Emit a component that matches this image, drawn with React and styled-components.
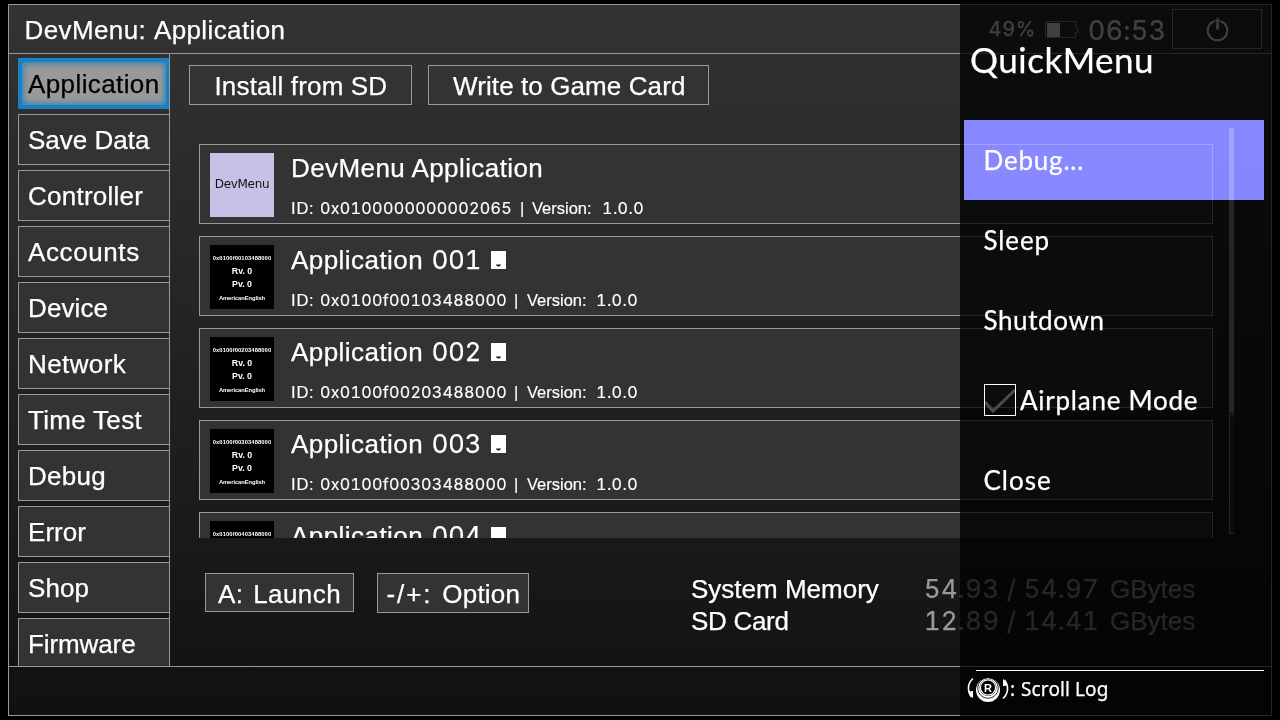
import React from 'react';
import styled, { createGlobalStyle } from 'styled-components';

const Global = createGlobalStyle`
  * { box-sizing: border-box; }
  body { margin: 0; background: #000; }
`;

const LINE = '#999';
const PANEL = '#333';

const Screen = styled.div`
  position: relative;
  width: 1280px;
  height: 720px;
  padding: 4px 8px;
  overflow: hidden;
  background: #000;
  color: #fff;
  font: 26px/32px 'Liberation Sans', Arial, sans-serif;
  white-space: pre;
  -webkit-text-stroke: 0.25px currentColor;
`;

const Frame = styled.div`
  height: 712px;
  display: flex;
  flex-direction: column;
  border: 1px solid ${LINE};
  background: linear-gradient(#333, #111);
`;

const Header = styled.header`
  height: 49px;
  flex: none;
  display: flex;
  align-items: center;
  padding: 2px 9px 0 15.5px;
  border-bottom: 1px solid ${LINE};
`;

const Text = styled.span`
  letter-spacing: ${(p) => p.$ls || 0}px;
`;

const Digits = styled.span`
  font-family: Inter, sans-serif;
  font-size: 0.98em;
  font-variant-numeric: tabular-nums;
  font-feature-settings: 'tnum', 'calt' 0;
  letter-spacing: ${(p) => p.$ls || 0}px;
  width: ${(p) => (p.$w ? p.$w + 'px' : 'auto')};
`;

const Title = styled.h1`
  margin: 0;
  flex: 1;
  font: inherit;
  letter-spacing: 0.4px;
  word-spacing: 1.5px;
`;

const Percent = styled(Digits)`
  font-size: 20px;
  letter-spacing: 0.6px;
  margin-right: 9px;
  margin-top: -2px;
`;

const Clock = styled(Digits)`
  width: 84px;
  margin-left: 9px;
  font-size: 26.5px;
  letter-spacing: 0.5px;
`;

const PowerButton = styled.button`
  width: 90px;
  height: 40px;
  margin: -2px 0 0;
  padding: 0;
  display: flex;
  align-items: center;
  justify-content: center;
  color: #fff;
  background: ${PANEL};
  border: 1px solid ${LINE};
`;

const Body = styled.div`
  height: 612px;
  flex: none;
  display: flex;
`;

const Sidebar = styled.nav`
  width: 161px;
  flex: none;
  display: flex;
  flex-direction: column;
  gap: 5px;
  padding: 4px 0 0 9px;
  overflow: hidden;
  border-right: 1px solid ${LINE};
`;

const Tab = styled.div`
  height: 51px;
  flex: none;
  padding-left: 9px;
  line-height: 50px;
  letter-spacing: ${(p) => p.$ls}px;
  color: ${(p) => (p.$active ? '#000' : '#fff')};
  background: ${(p) => (p.$active ? '#999' : PANEL)};
  border: 1px solid ${(p) => (p.$active ? '#1a80c4' : LINE)};
  border-right: 0;
  box-shadow: ${(p) =>
    p.$active ? 'inset 0 0 0 3px #1a80c4, inset 0 0 6px 4px #1a80c4' : 'none'};
`;

const Main = styled.main`
  flex: 1;
  display: flex;
  flex-direction: column;
`;

const Actions = styled.div`
  display: flex;
  gap: 16px;
  padding: 11px 0 0 19px;
`;

const Button = styled.button`
  width: ${(p) => p.$w}px;
  height: ${(p) => p.$h || 40}px;
  padding: 2px 0 0 ${(p) => p.$pad}px;
  font: inherit;
  line-height: 32px;
  letter-spacing: ${(p) => p.$ls || 0}px;
  word-spacing: ${(p) => p.$ws || 0}px;
  text-align: left;
  color: #fff;
  background: ${PANEL};
  border: 1px solid ${LINE};
`;

const ListArea = styled.div`
  height: 410px;
  margin-top: 23px;
  display: flex;
  overflow: hidden;
  padding-left: 29px;
`;

const List = styled.div`
  width: 1014px;
  flex: none;
  display: flex;
  flex-direction: column;
  gap: 12px;
  padding-top: 16px;
`;

const Row = styled.div`
  height: 80px;
  flex: none;
  display: flex;
  gap: 17px;
  padding: 8px 10px;
  background: ${PANEL};
  border: 1px solid ${LINE};
`;

const Thumb = styled.div`
  width: 64px;
  height: 64px;
  flex: none;
  display: flex;
  flex-direction: column;
  align-items: center;
  -webkit-text-stroke: 0;
  color: ${(p) => (p.$light ? '#111' : '#fff')};
  background: ${(p) => (p.$light ? '#c8c0e6' : '#000')};
`;

const ThumbName = styled.span`
  font: 12px/62px 'DejaVu Sans', sans-serif;
  letter-spacing: -0.3px;
`;

const ThumbSmall = styled.span`
  font-size: 5.8px;
  line-height: 8px;
  font-weight: bold;
  margin-top: ${(p) => p.$top}px;
  letter-spacing: ${(p) => p.$ls || 0}px;
`;

const ThumbMid = styled.span`
  font-size: 8.8px;
  line-height: 12.5px;
  font-weight: bold;
`;

const ThumbLines = styled.div`
  display: flex;
  flex-direction: column;
  align-items: center;
  padding-top: 3.5px;
`;

const Info = styled.div`
  display: flex;
  flex-direction: column;
`;

const Name = styled.div`
  height: 32px;
  display: flex;
  margin-top: -1px;
`;

const NameNumber = styled(Digits)`
  width: 59px;
  margin-left: 1px;
`;

const CardIcon = styled.svg`
  margin: 7px 0 0;
`;

const Meta = styled.div`
  display: flex;
  margin-top: 13px;
  font-size: 16.5px;
  line-height: 22px;
  -webkit-text-stroke-width: 0.15px;
`;

const MetaPart = styled.span`
  letter-spacing: ${(p) => p.$ls || 0}px;
  width: ${(p) => (p.$w ? p.$w + 'px' : 'auto')};
`;

const Scrollbar = styled.div`
  width: 5px;
  height: 406px;
  margin-left: 16px;
  display: flex;
  flex-direction: column;
  gap: 1px;
`;

const ScrollThumb = styled.div`
  height: 285px;
  background: ${LINE};
`;

const ScrollRest = styled.div`
  flex: 1;
  background: ${PANEL};
  border: 1px solid ${LINE};
  border-right: 0;
`;

const Bottom = styled.div`
  display: flex;
  padding: 35px 0 0 35px;
`;

const Hints = styled.div`
  width: 486px;
  display: flex;
  align-items: flex-start;
  gap: 23px;
`;

const Storage = styled.div`
  display: grid;
  grid-template-columns: 233px 186px auto;
  grid-auto-rows: 32px;
`;

const Amount = styled(Digits)`
  color: #999;
  letter-spacing: 0.5px;
`;

const Unit = styled.span`
  color: #999;
`;

const QuickPanel = styled.aside`
  position: absolute;
  top: 0;
  left: 960px;
  width: 320px;
  height: 720px;
  display: flex;
  flex-direction: column;
  background: rgba(0, 0, 0, 0.75);
  font-family: Lato, sans-serif;
`;

const QuickLayer = styled.div`
  position: absolute;
  top: 120px;
  left: 964px;
  width: 300px;
  height: 80px;
  background: #7c7cf6;
  mix-blend-mode: plus-lighter;
`;

const QuickContent = styled(QuickPanel)`
  background: none;
`;

const QuickTitle = styled.h2`
  height: 120px;
  margin: 0;
  padding: 37px 0 0 10px;
  font-size: 35px;
  line-height: 44px;
  font-weight: 400;
  letter-spacing: 0.5px;
`;

const QuickItem = styled.div`
  height: 80px;
  display: flex;
  align-items: center;
  padding: 0 0 0 23.5px;
  letter-spacing: ${(p) => p.$ls || 0.6}px;
`;

const Check = styled.span`
  width: 32px;
  height: 32px;
  flex: none;
  margin: 0 4px 0 0.5px;
  border: 1px solid #fff;
`;

const Rule = styled.div`
  height: 1px;
  margin: 150px 16px 0 16px;
  background: #fff;
`;

const QuickFooter = styled.footer`
  display: flex;
  align-items: center;
  height: 35px;
  margin: 0 16px 0 6px;
  font: 19px/30px 'Noto Sans', sans-serif;
`;

const FootLabel = styled.span`
  margin-left: 6px;
  letter-spacing: 0.1px;
`;

const StatusBar = styled.div`
  flex: 1;
  border-top: 1px solid ${LINE};
`;

const tabs = [
  ['Application', 0.4],
  ['Save Data', 0],
  ['Controller', 0.25],
  ['Accounts', 0.6],
  ['Device', 0.1],
  ['Network', 0.4],
  ['Time Test', 0.3],
  ['Debug', 0.3],
  ['Error', 0.05],
  ['Shop', 0.1],
  ['Firmware', -0.1],
];

const apps = ['1', '2', '3', '4'];

const Battery = () => (
  <svg width="34" height="20" viewBox="0 0 34 20" fill="none">
    <path d="M.5 1.5h30v5h2v6h-2v5H.5z" stroke={LINE} />
    <path d="M2 3h13v14H2z" fill="#fff" />
  </svg>
);

const PowerIcon = () => (
  <svg width="24" height="26" viewBox="0 0 24 26" fill="none" stroke="#fff" strokeWidth="2">
    <circle cx="12.5" cy="14.5" r="9.8" />
    <path d="M12.5 2v1.500M12.5 6.500v7" strokeWidth="2.5" />
    <path d="M9.8 4.500v3M15.2 4.500v3" stroke={PANEL} strokeWidth="1.2" />
  </svg>
);

const StickIcon = () => (
  <svg width="44" height="28" viewBox="0 0 44 28" fill="none" stroke="#fff">
    <circle cx="22" cy="15" r="12" fill="#fff" stroke="none" />
    <circle cx="22" cy="13" r="10.3" stroke="#000" strokeWidth="0.8" />
    <circle cx="22" cy="12.5" r="8" fill="#000" stroke="#000" strokeWidth="1" />
    <circle cx="22" cy="12.5" r="7.6" strokeWidth="1.2" />
    <text x="22" y="16.5" textAnchor="middle" fontFamily="Liberation Sans" fontSize="11" fontWeight="bold" fill="#fff" stroke="none">R</text>
    <path d="M7 3.500C1.500 8 1 16 5.500 22" strokeWidth="1.6" />
    <path d="M2.300 16.500l4.700-.5v7.500z" fill="#fff" stroke="none" />
    <path d="M37 23.500c5.500-5 6-12.500 1.500-18.500" strokeWidth="1.6" />
    <path d="M37 3.500v7.500l4.700-.5z" fill="#fff" stroke="none" />
  </svg>
);

function AppRow({ n, peek }) {
  return (
    <Row>
      <Thumb>
        <ThumbSmall $top={8.5} $ls={0.1}>{`0x0100f00${n}03488000`}</ThumbSmall>
        {!peek && (
          <ThumbLines>
            <ThumbMid>Rv. 0</ThumbMid>
            <ThumbMid>Pv. 0</ThumbMid>
            <ThumbSmall $top={4} $ls={-0.08}>AmericanEnglish</ThumbSmall>
          </ThumbLines>
        )}
      </Thumb>
      <Info>
        <Name>
          <Text $ls={0.45}>Application </Text>
          <NameNumber>{`00${n}`}</NameNumber>
          <CardIcon width="15" height="18" viewBox="0 0 15 18">
            <path d="M0 0h15v18H0z" fill="#fff" />
            <path d="M5 13.500h5v.5l-1.500 1.500h-2L5 14z" fill="#222" />
          </CardIcon>
        </Name>
        {!peek && (
          <Meta>
            <MetaPart $w={29} $ls={0.8}>ID:</MetaPart>
            <Digits $w={194} $ls={0.25}>{`0x0100f00${n}03488000`}</Digits>
            <MetaPart $w={13}>|</MetaPart>
            <MetaPart $w={69}>Version:</MetaPart>
            <Digits $ls={0.4}>1.0.0</Digits>
          </Meta>
        )}
      </Info>
    </Row>
  );
}

export default function App() {
  return (
    <Screen>
      <Global />
      <Frame>
        <Header>
          <Title>DevMenu: Application</Title>
          <Percent>49%</Percent>
          <Battery />
          <Clock>06:53</Clock>
          <PowerButton><PowerIcon /></PowerButton>
        </Header>
        <Body>
          <Sidebar>
            {tabs.map(([name, ls], i) => (
              <Tab key={name} $ls={ls} $active={i === 0}>{name}</Tab>
            ))}
          </Sidebar>
          <Main>
            <Actions>
              <Button $w={223} $pad={24.5} $ls={0.15}>Install from SD</Button>
              <Button $w={281} $pad={24} $ls={0.1}>Write to Game Card</Button>
            </Actions>
            <ListArea>
              <List>
                <Row>
                  <Thumb $light><ThumbName>DevMenu</ThumbName></Thumb>
                  <Info>
                    <Name><Text $ls={0.42}>DevMenu Application</Text></Name>
                    <Meta>
                      <MetaPart $w={29} $ls={0.8}>ID:</MetaPart>
                      <Digits $w={200} $ls={0.28}>0x0100000000002065</Digits>
                      <MetaPart $w={12}>|</MetaPart>
                      <MetaPart $w={70}>Version:</MetaPart>
                      <Digits $ls={0.4}>1.0.0</Digits>
                    </Meta>
                  </Info>
                </Row>
                {apps.map((n, i) => <AppRow key={n} n={n} peek={i === 3} />)}
              </List>
              <Scrollbar>
                <ScrollThumb />
                <ScrollRest />
              </Scrollbar>
            </ListArea>
            <Bottom>
              <Hints>
                <Button $w={149} $h={39} $pad={12} $ls={0.45} $ws={2}>A: Launch</Button>
                <Button $w={152} $pad={8.5} $ws={2.5}><Text $ls={1.9}>-/+:</Text><Text $ls={0.2}> Option</Text></Button>
              </Hints>
              <Storage>
                <Text>System Memory</Text>
                <Amount>54.93 / 54.97</Amount>
                <Unit>GBytes</Unit>
                <Text $ls={-0.3}>SD Card</Text>
                <Amount>12.89 / 14.41</Amount>
                <Unit>GBytes</Unit>
              </Storage>
            </Bottom>
          </Main>
        </Body>
        <StatusBar />
      </Frame>
      <QuickPanel />
      <QuickLayer />
      <QuickContent>
        <QuickTitle>QuickMenu</QuickTitle>
        <QuickItem $ls={0.8}>Debug...</QuickItem>
        <QuickItem $ls={0.9}>Sleep</QuickItem>
        <QuickItem>Shutdown</QuickItem>
        <QuickItem $ls={0.75}>
          <Check>
            <svg width="30" height="30" viewBox="0 0 30 30" fill="none">
              <path d="M0 17l8 9L30 5" stroke="#4c4c4c" strokeWidth="3" />
            </svg>
          </Check>
          Airplane Mode
        </QuickItem>
        <QuickItem $ls={1}>Close</QuickItem>
        <Rule />
        <QuickFooter>
          <StickIcon />
          <span>:</span>
          <FootLabel>Scroll Log</FootLabel>
        </QuickFooter>
      </QuickContent>
    </Screen>
  );
}
